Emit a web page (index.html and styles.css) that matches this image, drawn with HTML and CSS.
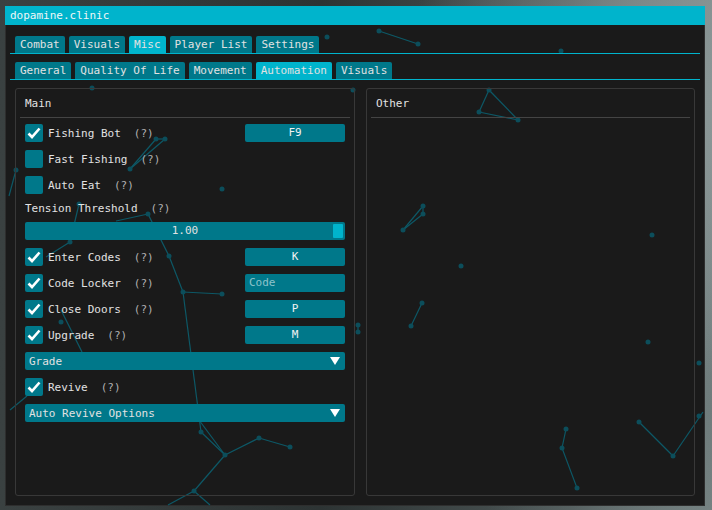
FILE: index.html
```html
<!DOCTYPE html>
<html lang="en">
<head>
  <meta charset="UTF-8">
  <title>dopamine.clinic</title>
  <link rel="stylesheet" href="styles.css">
</head>
<body>
  <div class="window">
    <!-- background particle network (free canvas, page coordinates) -->
    <svg class="particles" width="700" height="500" viewBox="5 6 700 500">
      <g class="links">
        <line x1="379" y1="31" x2="418" y2="44"/>
        <line x1="156" y1="139" x2="130" y2="169"/>
        <line x1="165" y1="139" x2="130" y2="169"/>
        <line x1="156" y1="139" x2="165" y2="139"/>
        <line x1="16" y1="170" x2="9" y2="196"/>
        <line x1="79" y1="204" x2="70" y2="242"/>
        <line x1="70" y1="242" x2="46" y2="257"/>
        <line x1="148" y1="214" x2="116" y2="221"/>
        <line x1="148" y1="214" x2="169" y2="256"/>
        <line x1="169" y1="256" x2="183" y2="292"/>
        <line x1="183" y1="292" x2="222" y2="294"/>
        <line x1="183" y1="292" x2="201" y2="432"/>
        <line x1="61" y1="310" x2="82" y2="352"/>
        <line x1="201" y1="432" x2="225" y2="455"/>
        <line x1="199" y1="420" x2="225" y2="455"/>
        <line x1="225" y1="455" x2="259" y2="438"/>
        <line x1="259" y1="438" x2="290" y2="447"/>
        <line x1="225" y1="455" x2="194" y2="491"/>
        <line x1="194" y1="491" x2="168" y2="505"/>
        <line x1="194" y1="491" x2="210" y2="505"/>
        <line x1="10" y1="410" x2="27" y2="396"/>
        <line x1="489" y1="90" x2="479" y2="112"/>
        <line x1="479" y1="112" x2="518" y2="120"/>
        <line x1="489" y1="90" x2="518" y2="120"/>
        <line x1="423" y1="206" x2="403" y2="230"/>
        <line x1="423" y1="214" x2="403" y2="230"/>
        <line x1="423" y1="206" x2="423" y2="214"/>
        <line x1="422" y1="303" x2="411" y2="326"/>
        <line x1="358" y1="325" x2="358" y2="332"/>
        <line x1="566" y1="429" x2="562" y2="448"/>
        <line x1="562" y1="448" x2="577" y2="488"/>
        <line x1="639" y1="422" x2="673" y2="456"/>
        <line x1="673" y1="456" x2="703" y2="412"/>
      </g>
      <g class="nodes">
        <circle cx="379" cy="31" r="2.5"/><circle cx="418" cy="44" r="2.5"/>
        <circle cx="561" cy="51" r="2.5"/><circle cx="327" cy="37" r="2.5"/>
        <circle cx="92" cy="88" r="2.5"/><circle cx="353" cy="90" r="2.5"/>
        <circle cx="156" cy="139" r="2.5"/><circle cx="165" cy="139" r="2.5"/>
        <circle cx="130" cy="169" r="2.5"/><circle cx="16" cy="170" r="2.5"/>
        <circle cx="222" cy="189" r="2.5"/><circle cx="79" cy="204" r="2.5"/>
        <circle cx="148" cy="214" r="2.5"/><circle cx="70" cy="242" r="2.5"/>
        <circle cx="169" cy="256" r="2.5"/><circle cx="183" cy="292" r="2.5"/>
        <circle cx="222" cy="294" r="2.5"/><circle cx="61" cy="322" r="2.5"/>
        <circle cx="201" cy="432" r="2.5"/><circle cx="225" cy="455" r="2.5"/>
        <circle cx="259" cy="438" r="2.5"/><circle cx="290" cy="447" r="2.5"/>
        <circle cx="194" cy="491" r="2.5"/>
        <circle cx="489" cy="90" r="2.5"/><circle cx="479" cy="112" r="2.5"/>
        <circle cx="518" cy="120" r="2.5"/><circle cx="423" cy="206" r="2.5"/>
        <circle cx="423" cy="214" r="2.5"/><circle cx="403" cy="230" r="2.5"/>
        <circle cx="652" cy="235" r="2.5"/><circle cx="461" cy="266" r="2.5"/>
        <circle cx="422" cy="303" r="2.5"/><circle cx="411" cy="326" r="2.5"/>
        <circle cx="358" cy="325" r="2.5"/><circle cx="358" cy="332" r="2.5"/>
        <circle cx="648" cy="342" r="2.5"/><circle cx="699" cy="363" r="2.5"/>
        <circle cx="566" cy="429" r="2.5"/><circle cx="562" cy="448" r="2.5"/>
        <circle cx="577" cy="488" r="2.5"/><circle cx="639" cy="422" r="2.5"/>
        <circle cx="673" cy="456" r="2.5"/><circle cx="699" cy="416" r="2.5"/>
      </g>
    </svg>

    <div class="titlebar">dopamine.clinic</div>

    <div class="content">
      <div class="tabbar">
        <span class="tab">Combat</span>
        <span class="tab">Visuals</span>
        <span class="tab active">Misc</span>
        <span class="tab">Player List</span>
        <span class="tab">Settings</span>
      </div>
      <div class="tabbar sub">
        <span class="tab">General</span>
        <span class="tab">Quality Of Life</span>
        <span class="tab">Movement</span>
        <span class="tab active">Automation</span>
        <span class="tab">Visuals</span>
      </div>

      <div class="columns">
        <section class="panel panel-main">
          <div class="panel-title">Main</div>
          <div class="rows">
            <div class="row">
              <span class="check on"><svg viewBox="0 0 18 18"><polyline points="3.5,9.5 7,13 14.5,4.5"/></svg></span>
              <span class="label">Fishing Bot</span><span class="help">(?)</span>
              <span class="keybind">F9</span>
            </div>
            <div class="row">
              <span class="check"></span>
              <span class="label">Fast Fishing</span><span class="help">(?)</span>
            </div>
            <div class="row">
              <span class="check"></span>
              <span class="label">Auto Eat</span><span class="help">(?)</span>
            </div>
            <div class="row text-row">
              <span class="label">Tension Threshold</span><span class="help">(?)</span>
            </div>
            <div class="slider">
              <span class="slider-value">1.00</span>
              <span class="slider-grab"></span>
            </div>
            <div class="row">
              <span class="check on"><svg viewBox="0 0 18 18"><polyline points="3.5,9.5 7,13 14.5,4.5"/></svg></span>
              <span class="label">Enter Codes</span><span class="help">(?)</span>
              <span class="keybind">K</span>
            </div>
            <div class="row">
              <span class="check on"><svg viewBox="0 0 18 18"><polyline points="3.5,9.5 7,13 14.5,4.5"/></svg></span>
              <span class="label">Code Locker</span><span class="help">(?)</span>
              <span class="keybind input">Code</span>
            </div>
            <div class="row">
              <span class="check on"><svg viewBox="0 0 18 18"><polyline points="3.5,9.5 7,13 14.5,4.5"/></svg></span>
              <span class="label">Close Doors</span><span class="help">(?)</span>
              <span class="keybind">P</span>
            </div>
            <div class="row">
              <span class="check on"><svg viewBox="0 0 18 18"><polyline points="3.5,9.5 7,13 14.5,4.5"/></svg></span>
              <span class="label">Upgrade</span><span class="help">(?)</span>
              <span class="keybind">M</span>
            </div>
            <div class="combo">
              <span>Grade</span>
              <svg class="arrow" viewBox="0 0 10 8"><polygon points="0,0 10,0 5,8"/></svg>
            </div>
            <div class="row">
              <span class="check on"><svg viewBox="0 0 18 18"><polyline points="3.5,9.5 7,13 14.5,4.5"/></svg></span>
              <span class="label">Revive</span><span class="help">(?)</span>
            </div>
            <div class="combo">
              <span>Auto Revive Options</span>
              <svg class="arrow" viewBox="0 0 10 8"><polygon points="0,0 10,0 5,8"/></svg>
            </div>
          </div>
        </section>

        <section class="panel panel-other">
          <div class="panel-title">Other</div>
        </section>
      </div>
    </div>
  </div>
</body>
</html>
```

FILE: styles.css
```css
:root {
  --accent: #00b4cc;
  --widget: #00788a;
  --window-bg: #1a1a1a;
  --text: #e2e2e2;
  --text-dim: #b0b0b0;
  --line: #444444;
}

* {
  margin: 0;
  padding: 0;
  box-sizing: border-box;
}

body {
  width: 712px;
  height: 510px;
  overflow: hidden;
  font-family: "DejaVu Sans Mono", "Liberation Mono", monospace;
  font-size: 11px;
  color: var(--text);
  background:
    radial-gradient(circle at 95% 20%, #8c9898 0%, transparent 35%),
    radial-gradient(circle at 100% 80%, #6f7c7c 0%, transparent 30%),
    linear-gradient(90deg, #3a4141 0%, #2d3434 45%, #4c5656 80%, #7d8a8a 100%);
}

.window {
  position: relative;
  width: 700px;
  height: 500px;
  margin: 6px 0 0 5px;
  background: var(--window-bg);
  border: 1px solid #2e2e2e;
  border-top: 0;
}

.particles {
  position: absolute;
  top: 0;
  left: -1px;
  z-index: 0;
}

.particles .links line {
  stroke: #0d5866;
  stroke-width: 1.2;
}

.particles .nodes circle {
  fill: #0c4e5b;
}

.titlebar {
  position: relative;
  z-index: 1;
  height: 19px;
  margin: 0 -1px;
  padding-left: 5px;
  line-height: 19px;
  background: var(--accent);
  color: #eef7f8;
}

.content {
  position: relative;
  z-index: 1;
  padding: 11px 4px 0;
}

/* Tab bars */
.tabbar {
  display: flex;
  gap: 4px;
  padding-left: 5px;
  border-bottom: 1px solid var(--accent);
}

.tabbar.sub {
  margin-top: 8px;
}

.tab {
  height: 17px;
  padding: 0 5px;
  line-height: 17px;
  background: var(--widget);
  border-radius: 2px 2px 0 0;
  white-space: nowrap;
}

.tab.active {
  background: var(--accent);
}

/* Columns */
.columns {
  display: flex;
  gap: 11px;
  margin-top: 8px;
  padding: 0 5px;
}

.panel {
  height: 408px;
  padding: 0 4px;
  border: 1px solid #383838;
  border-radius: 3px;
}

.panel-main {
  width: 340px;
}

.panel-other {
  flex: 1;
}

.panel-title {
  height: 29px;
  padding-left: 5px;
  line-height: 29px;
  border-bottom: 1px solid var(--line);
}

.rows {
  display: flex;
  flex-direction: column;
  gap: 8px;
  padding: 6px 5px 0;
}

.row {
  display: flex;
  align-items: center;
  height: 18px;
}

.row.text-row {
  height: 12px;
}

.check {
  width: 18px;
  height: 18px;
  margin-right: 5px;
  background: var(--widget);
  border-radius: 2px;
}

.check svg {
  display: block;
  width: 18px;
  height: 18px;
}

.check polyline {
  fill: none;
  stroke: #ffffff;
  stroke-width: 2.6;
}

.help {
  margin-left: 13px;
  color: var(--text-dim);
}

.keybind {
  width: 100px;
  height: 18px;
  margin-left: auto;
  line-height: 18px;
  text-align: center;
  background: var(--widget);
  border-radius: 2px;
  color: #f2f2f2;
}

.keybind.input {
  padding-left: 4px;
  text-align: left;
  color: #8ec3cb;
}

/* Slider */
.slider {
  position: relative;
  height: 18px;
  line-height: 18px;
  text-align: center;
  background: var(--widget);
  border-radius: 2px;
}

.slider-grab {
  position: absolute;
  top: 2px;
  right: 2px;
  width: 10px;
  height: 14px;
  background: var(--accent);
  border-radius: 1px;
}

/* Combo boxes */
.combo {
  display: flex;
  align-items: center;
  justify-content: space-between;
  height: 18px;
  padding: 0 5px 0 4px;
  background: var(--widget);
  border-radius: 2px;
}

.combo .arrow {
  width: 10px;
  height: 8px;
  fill: #ffffff;
}
```
